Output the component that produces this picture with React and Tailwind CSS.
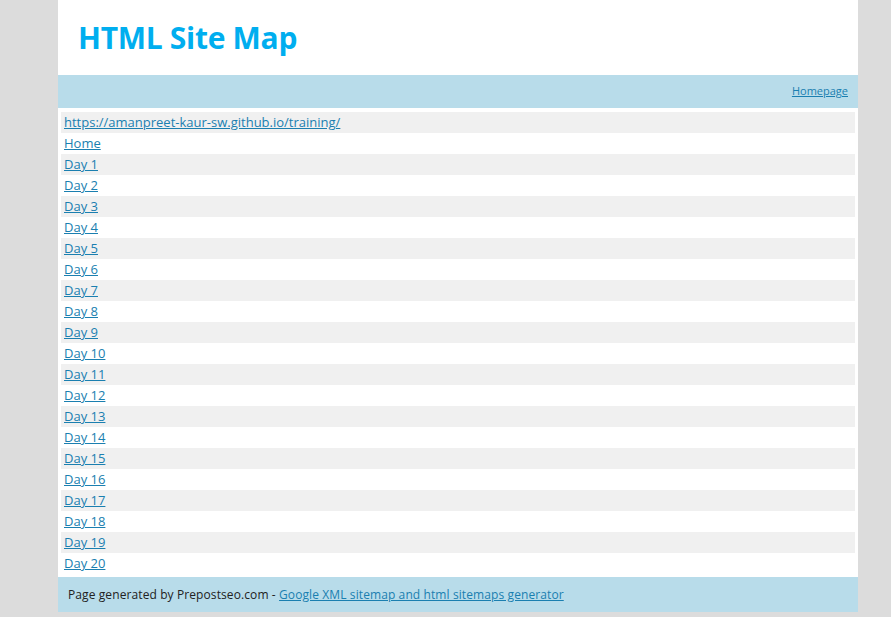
const days = Array.from({ length: 20 }, (_, i) => `Day ${i + 1}`);

const links = ["https://amanpreet-kaur-sw.github.io/training/", "Home", ...days];

export default function App() {
  return (
    <div className="min-h-[617px] bg-[#dcdcdc] font-['Open_Sans','DejaVu_Sans',sans-serif]">
      <div className="ml-[58px] w-[800px] bg-white">
        <header className="flex h-[75px] items-center px-5">
          <h1 className="text-[30px] font-bold tracking-[-0.3px] text-[#00aeef]">HTML Site Map</h1>
        </header>
        <div className="flex h-[33px] items-center justify-end bg-[#b8dcea] px-[10px]">
          <a href="#" className="text-[11px] text-[#1a7fb0] underline">Homepage</a>
        </div>
        <ul className="px-[3px] pt-[4px] pb-[3px]">
          {links.map((label, i) => (
            <li
              key={label}
              className={`flex h-[21px] items-center px-[3px] ${i % 2 === 0 ? "bg-[#f0f0f0]" : "bg-white"}`}
            >
              <a href="#" className="text-[13px] text-[#1a7fb0] underline">{label}</a>
            </li>
          ))}
        </ul>
        <footer className="flex h-[35px] items-center bg-[#b8dcea] px-[10px] text-[12px] tracking-[0.1px] text-[#222]">
          <span>Page generated by Prepostseo.com -&nbsp;</span>
          <a href="#" className="text-[#1a7fb0] underline">Google XML sitemap and html sitemaps generator</a>
        </footer>
      </div>
    </div>
  );
}
